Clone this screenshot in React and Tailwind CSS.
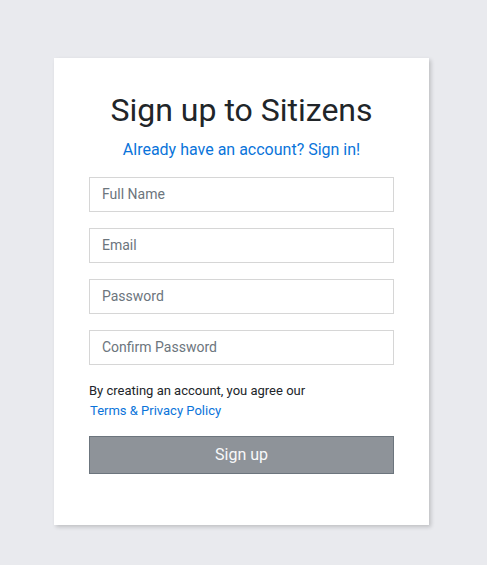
import React, { useState } from 'react';

const FIELDS = [
  { name: 'name', type: 'text', placeholder: 'Full Name' },
  { name: 'email', type: 'email', placeholder: 'Email' },
  { name: 'password', type: 'password', placeholder: 'Password' },
  { name: 'confirm', type: 'password', placeholder: 'Confirm Password' },
];

export default function App() {
  const [form, setForm] = useState({ name: '', email: '', password: '', confirm: '' });

  const handleChange = (e) => setForm({ ...form, [e.target.name]: e.target.value });

  return (
    <div className="min-h-screen bg-[#e9eaee] pt-[58px] pr-[4px] pb-10" style={{ fontFamily: 'Roboto, "Noto Sans", sans-serif' }}>
      <div className="mx-auto w-[375px] bg-white shadow-[2px_2px_4px_rgba(0,0,0,0.18)] px-[35px] pt-[33px] pb-[51px]">
        <h1 className="text-center text-[32px] leading-[38px] text-[#212529]">Sign up to Sitizens</h1>
        <p className="text-center mt-[11px] text-[16px] leading-[20px]">
          <a href="#" className="text-[#0a74da]">Already have an account? Sign in!</a>
        </p>

        <form className="mt-[17px] flex flex-col gap-[16px]" onSubmit={e => e.preventDefault()}>
          {FIELDS.map(f => (
            <input key={f.name} name={f.name} type={f.type} value={form[f.name]} onChange={handleChange}
              placeholder={f.placeholder}
              className="h-[35px] w-full border border-[#d6d6d6] px-[12px] pb-[1px] text-[14px] text-[#495057] placeholder:text-[#6c757d] focus:outline-none" />
          ))}

          <div className="text-[13px] leading-[20px] text-[#212529]">
            <p>By creating an account, you agree our</p>
            <a href="#" className="ml-[1px] text-[#0a74da]">Terms &amp; Privacy Policy</a>
          </div>

          <button type="submit"
            className="-mt-[1px] h-[38px] w-full border border-[#6c757d] bg-[#8e9399] text-[16px] text-[#f8f9fa]">
            Sign up
          </button>
        </form>
      </div>
    </div>
  );
}
